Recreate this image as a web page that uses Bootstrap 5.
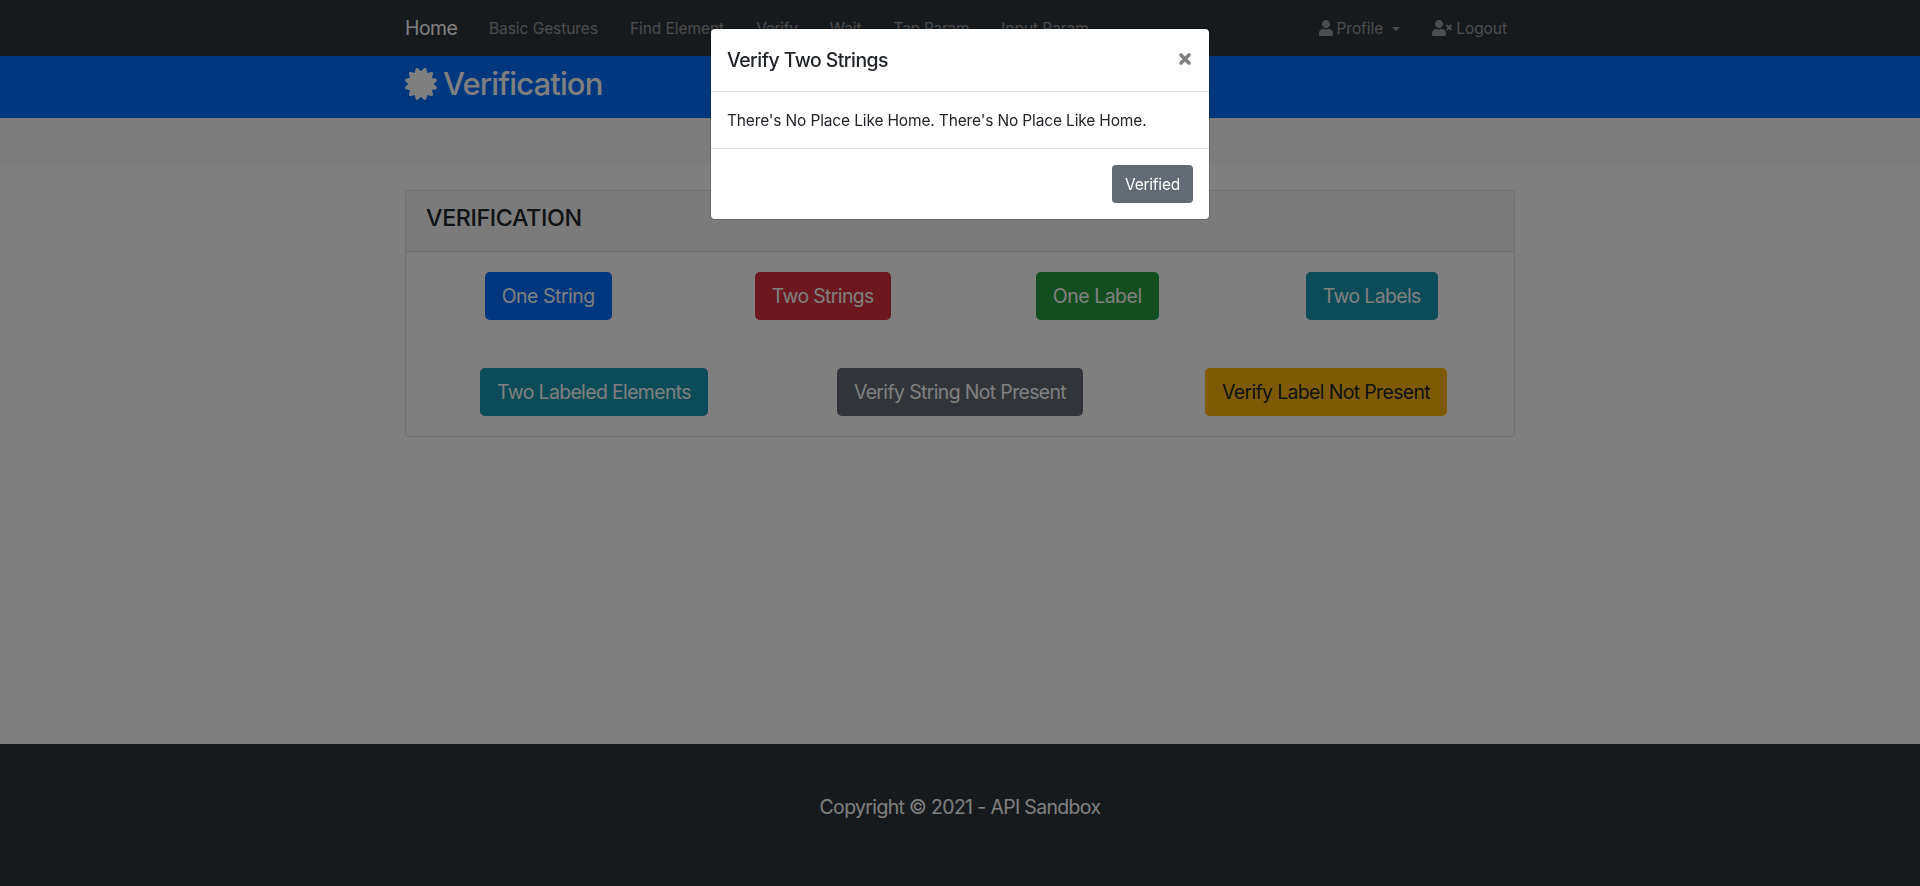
<!DOCTYPE html>
<html lang="en">
<head>
<meta charset="utf-8">
<title>Verification</title>
<meta name="viewport" content="width=device-width, initial-scale=1">
<link href="https://cdn.jsdelivr.net/npm/bootstrap@5.3.0/dist/css/bootstrap.min.css" rel="stylesheet">
<style>
body { font-family: Inter, "Liberation Sans", sans-serif; font-size: 15.5px; line-height: 24px; color: #212529; height: 886px; overflow: hidden; display: flex; flex-direction: column; }
.page { width: 1110px; margin: 0 auto; }
/* header */
.topbar { background: #2e353b; height: 56px; padding: 0; }
.topbar .navbar-brand { font-size: 19.4px; letter-spacing: -.5px; width: 52px; margin-right: 16px; padding: 0; line-height: 30px; color: #fff; }
.topbar .navbar-nav .nav-link { color: rgba(255,255,255,.5); padding: 9px 16px 7px; white-space: nowrap; }
.main-links .nav-link { letter-spacing: -.06px; }
.main-links .tight { letter-spacing: -.27px; }
.side-links { margin-right: -8px; }
.side-links .nav-link { display: flex; align-items: center; letter-spacing: -.05px; }
.side-links svg { margin: -2px 4px 0 0; }
.side-links .dropdown-toggle::after { margin-left: 9px; border-top-width: 4.8px; border-left-width: 4.8px; border-right-width: 4.8px; }
svg { fill: currentColor; flex: none; }
.hero { background: #006fff; height: 62px; color: #fff; }
.hero h1 { font-size: 31px; letter-spacing: -.87px; line-height: 38px; margin: 0; padding-top: 9px; gap: 6px; }
.strip { background: #f8f9fa; height: 48px; margin-bottom: 24px; }
/* verification panel */
.panel { border-color: rgba(0,0,0,.125); border-radius: 4px; height: 247px; }
.panel .card-header { background: rgba(0,0,0,.03); border-color: rgba(0,0,0,.125); height: 61px; padding: 12px 20px; }
.panel h4 { font-size: 23.3px; line-height: 29px; letter-spacing: -.38px; margin: 0; }
.panel .card-body { padding: 20px; }
.panel .row { --bs-gutter-x: 30px; }
.panel .btn { font-size: 19.4px; line-height: 30px; height: 48px; padding: 8px 16px; border: 1px solid transparent; border-radius: 4.8px; color: #fff; letter-spacing: -.61px; white-space: nowrap; }
.panel .btn.loose { letter-spacing: -.44px; }
.c-blue { background: #006fff; } .c-red { background: #d63040; } .c-green { background: #249c3e; }
.c-teal { background: #1996b0; } .c-gray { background: #626a74; }
.panel .c-yellow { background: #ffb40c; color: #212529; }
.foot { background: #2e353b; height: 142px; color: #fff; padding-top: 48px; font-size: 19.4px; line-height: 30px; letter-spacing: -.61px; }
/* dialog */
.modal-backdrop { background: #000; }
.modal-dialog { max-width: 500px; margin: 28px auto; }
.modal-content { border: 1px solid rgba(0,0,0,.2); border-radius: 4.8px; color: #212529; background: #fff; background-clip: padding-box; }
.modal-header { padding: 16px; height: 63px; border-bottom: 1px solid #dee2e6; }
.modal-title { font-size: 19.4px; line-height: 30px; letter-spacing: -.52px; }
.modal-body { padding: 17px 16px 15px; letter-spacing: -.15px; }
.modal-footer { padding: 12px; border-top: 1px solid #dee2e6; }
.modal-footer .btn { font-size: 15.5px; line-height: 24px; height: 38px; padding: 7px 12px 5px; border: 1px solid transparent; border-radius: 4px; color: #fff; letter-spacing: -.22px; }
.close-x { border: 0; background: none; padding: 0 1px 0 0; color: #808080; line-height: 0; margin-top: -2px; }
.close-x svg { stroke: currentColor; stroke-width: 3.6; stroke-linecap: round; }
</style>
</head>
<body class="modal-open">
<nav class="navbar navbar-expand topbar">
  <div class="page d-flex align-items-center">
    <a class="navbar-brand" href="#">Home</a>
    <div class="navbar-nav main-links me-auto">
      <a class="nav-link" href="#">Basic Gestures</a>
      <a class="nav-link" href="#">Find Element</a>
      <a class="nav-link tight" href="#">Verify</a>
      <a class="nav-link" href="#">Wait</a>
      <a class="nav-link tight" href="#">Tap Param</a>
      <a class="nav-link" href="#">Input Param</a>
    </div>
    <div class="navbar-nav side-links">
      <a class="nav-link dropdown-toggle" href="#"><svg width="14" height="16" viewBox="0 0 448 512"><path d="M224 256c70.7 0 128-57.3 128-128S294.7 0 224 0 96 57.3 96 128s57.3 128 128 128zm89.6 32h-16.7c-22.2 10.2-46.9 16-72.9 16s-50.6-5.8-72.9-16h-16.7C60.2 288 0 348.2 0 422.4V464c0 26.5 21.5 48 48 48h352c26.5 0 48-21.5 48-48v-41.6c0-74.2-60.2-134.4-134.4-134.4z"/></svg>Profile</a>
      <a class="nav-link" href="#"><svg width="20" height="16" viewBox="0 0 640 512"><path d="M224 256c70.7 0 128-57.3 128-128S294.7 0 224 0 96 57.3 96 128s57.3 128 128 128zm89.6 32h-16.7c-22.2 10.2-46.9 16-72.9 16s-50.6-5.8-72.9-16h-16.7C60.2 288 0 348.2 0 422.4V464c0 26.5 21.5 48 48 48h352c26.5 0 48-21.5 48-48v-41.6c0-74.2-60.2-134.4-134.4-134.4z"/><path d="M589.6 240l45.6-45.6c6.3-6.3 6.3-16.5 0-22.8l-22.8-22.8c-6.3-6.3-16.5-6.3-22.8 0L544 194.4l-45.6-45.6c-6.3-6.3-16.5-6.3-22.8 0l-22.8 22.8c-6.3 6.3-6.3 16.5 0 22.8l45.6 45.6-45.6 45.6c-6.3 6.3-6.3 16.5 0 22.8l22.8 22.8c6.3 6.3 16.5 6.3 22.8 0l45.6-45.6 45.6 45.6c6.3 6.3 16.5 6.3 22.8 0l22.8-22.8c6.3-6.3 6.3-16.5 0-22.8L589.6 240z"/></svg>Logout</a>
    </div>
  </div>
</nav>
<header class="hero">
  <div class="page">
    <h1 class="d-flex align-items-center"><svg width="32" height="32" viewBox="0 0 512 512"><path d="M458.622 255.92l45.985-45.005c13.708-12.977 7.316-36.039-10.664-40.339l-62.65-15.99 17.661-62.015c4.991-17.838-11.829-34.663-29.661-29.671l-61.994 17.667-15.984-62.671C337.085.197 313.765-6.276 300.99 7.228L256 53.57 211.011 7.229c-12.63-13.351-36.047-7.234-40.325 10.668l-15.984 62.671-61.995-17.667C74.87 57.907 58.056 74.738 63.046 92.572l17.661 62.015-62.65 15.99C.069 174.878-6.31 197.944 7.392 210.915l45.985 45.005-45.985 45.004c-13.708 12.977-7.316 36.039 10.664 40.339l62.65 15.99-17.661 62.015c-4.991 17.838 11.829 34.663 29.661 29.671l61.994-17.667 15.984 62.671c4.439 18.575 27.696 24.018 40.325 10.668L256 458.61l44.989 46.001c12.5 13.488 35.987 7.486 40.325-10.668l15.984-62.671 61.994 17.667c17.836 4.994 34.651-11.837 29.661-29.671l-17.661-62.015 62.65-15.99c17.987-4.302 24.366-27.367 10.664-40.339l-45.984-45.004z"/></svg>Verification</h1>
  </div>
</header>
<div class="strip"></div>
<main class="page">
  <div class="card panel">
    <div class="card-header"><h4>VERIFICATION</h4></div>
    <div class="card-body">
      <div class="row text-center mb-5">
        <div class="col-3"><button class="btn loose c-blue">One String</button></div>
        <div class="col-3"><button class="btn c-red">Two Strings</button></div>
        <div class="col-3"><button class="btn loose c-green">One Label</button></div>
        <div class="col-3"><button class="btn c-teal">Two Labels</button></div>
      </div>
      <div class="row text-center">
        <div class="col-4"><button class="btn c-teal">Two Labeled Elements</button></div>
        <div class="col-4"><button class="btn c-gray">Verify String Not Present</button></div>
        <div class="col-4"><button class="btn c-yellow">Verify Label Not Present</button></div>
      </div>
    </div>
  </div>
</main>
<footer class="foot text-center mt-auto">Copyright © 2021 - API Sandbox</footer>

<div class="modal-backdrop show"></div>
<div class="modal show d-block" tabindex="-1" role="dialog" aria-modal="true">
  <div class="modal-dialog">
    <div class="modal-content">
      <div class="modal-header justify-content-between">
        <h5 class="modal-title">Verify Two Strings</h5>
        <button class="close-x" aria-label="Close"><svg width="14" height="14" viewBox="0 0 14 14"><path d="M3 3L11 11M11 3L3 11"/></svg></button>
      </div>
      <div class="modal-body">There's No Place Like Home. There's No Place Like Home.</div>
      <div class="modal-footer"><button class="btn c-gray">Verified</button></div>
    </div>
  </div>
</div>
<script src="https://cdn.jsdelivr.net/npm/bootstrap@5.3.0/dist/js/bootstrap.bundle.min.js"></script>
</body>
</html>
